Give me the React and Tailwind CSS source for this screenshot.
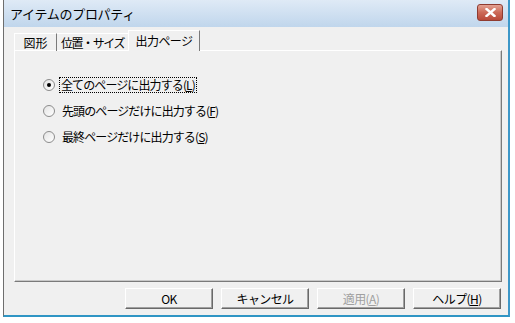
import React from 'react'

const font = { fontFamily: '"Noto Sans CJK JP", "Liberation Sans", sans-serif' }

function Radio({ checked, label, mnemonic, focused }) {
  return (
    <div className="flex items-center h-[26px]">
      <span className="w-[12px] h-[12px] rounded-full border border-[#8c8c8c] bg-gradient-to-br from-[#e4e4e4] to-white flex items-center justify-center">
        {checked && <span className="w-[4px] h-[4px] rounded-full bg-black" />}
      </span>
      <span
        className={`ml-[5px] px-[1px] text-[12px] leading-[14px] tracking-[-0.9px] text-black ${
          focused ? 'outline-1 outline-dotted outline-black' : 'border border-transparent'
        }`}
      >
        {label}(<span className="underline">{mnemonic}</span>)
      </span>
    </div>
  )
}

function Button({ children, disabled }) {
  return (
    <button
      className={`w-[88px] h-[21px] border border-t-white border-l-white border-r-[#696969] border-b-[#696969] bg-[#f0f0f0] shadow-[inset_-1px_-1px_0_#a0a0a0] text-[12px] leading-none tracking-[-0.6px] ${
        disabled ? 'text-[#a0a0a0]' : 'text-black'
      }`}
    >
      {children}
    </button>
  )
}

export default function App() {
  return (
    <div className="w-[515px] h-[323px] bg-white" style={font}>
      <div className="ml-[3px] w-[507px] h-[317px] flex flex-col border-l border-l-[#6e6e6e] border-r-2 border-r-[#3d97c8] border-b-2 border-b-[#2f95c4] bg-[#f0f0f0]">
        {/* タイトルバー */}
        <div className="h-[27px] flex items-center justify-between pl-[6px] pr-[5px] bg-gradient-to-b from-[#dfeaf6] to-[#c0d6ec]">
          <span className="text-[13px] text-black tracking-[-0.3px]">アイテムのプロパティ</span>
          <div className="w-[26px] h-[17px] rounded-[3px] border border-[#8f3b30] bg-gradient-to-b from-[#e3a294] via-[#cc6a58] to-[#b94a3a] flex items-center justify-center mb-[3px]">
            <svg width="11" height="9" viewBox="0 0 11 9">
              <path d="M1.5 1 L9.5 8 M9.5 1 L1.5 8" stroke="white" strokeWidth="2.4" strokeLinecap="square" />
            </svg>
          </div>
        </div>

        {/* 本体 */}
        <div className="flex-1 flex flex-col pl-[10px] pr-[6px] pt-[4px]">
          {/* タブ */}
          <div className="flex items-end h-[20px] relative z-10 -mb-[1px]">
            <div className="w-[43px] h-[18px] flex items-center justify-center border-t border-l border-t-white border-l-white border-r border-r-[#7a7a7a] text-[12px] tracking-[0px]">
              図形
            </div>
            <div className="w-[71px] h-[18px] flex items-center justify-center border-t border-t-white text-[12px] tracking-[-1.4px]">
              位置・サイズ
            </div>
            <div className="w-[72px] h-[21px] flex items-center justify-center bg-[#f0f0f0] border-t border-l border-t-white border-l-white border-r border-r-[#7a7a7a] text-[12px] tracking-[-0.6px]">
              出力ページ
            </div>
          </div>

          {/* パネル */}
          <div className="h-[232px] border border-t-white border-l-white border-r-[#7a7a7a] border-b-[#7a7a7a] shadow-[inset_-1px_-1px_0_#c8c8c8] pt-[21px] pl-[28px]">
            <Radio checked focused label="全てのページに出力する" mnemonic="L" />
            <Radio label="先頭のページだけに出力する" mnemonic="F" />
            <Radio label="最終ページだけに出力する" mnemonic="S" />
          </div>

          {/* ボタン */}
          <div className="flex justify-end gap-[8px] mt-[6px] pr-[1px]">
            <Button>OK</Button>
            <Button>キャンセル</Button>
            <Button disabled>
              適用(<span className="underline">A</span>)
            </Button>
            <Button>
              ヘルプ(<span className="underline">H</span>)
            </Button>
          </div>
        </div>
      </div>
    </div>
  )
}
